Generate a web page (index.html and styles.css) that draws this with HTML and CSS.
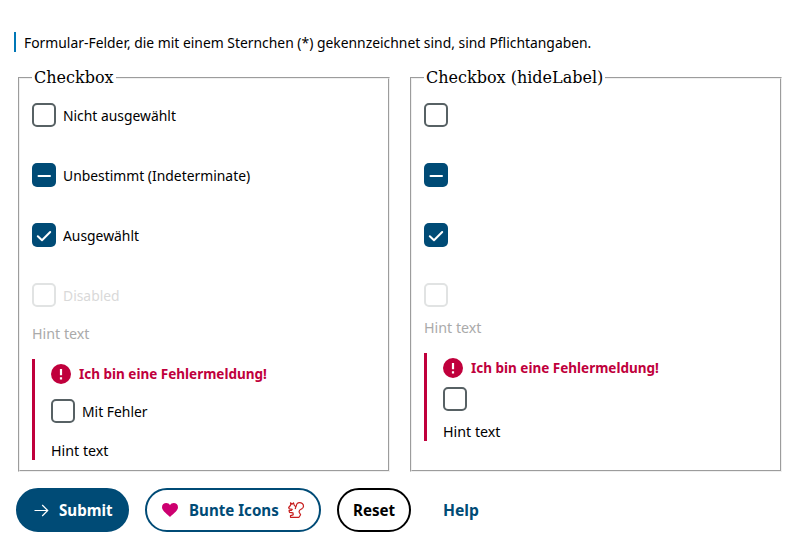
FILE: index.html
```
<!DOCTYPE html>
<html lang="de">
<head>
<meta charset="utf-8">
<title>Checkbox</title>
<link rel="stylesheet" href="styles.css">
</head>
<body>
<form class="form">
  <p class="notice"><span class="text">Formular-Felder, die mit einem Sternchen (*) gekennzeichnet sind, sind Pflichtangaben.</span></p>
  <div class="columns">
    <fieldset class="group">
      <legend>Checkbox</legend>
      <div class="field"><span class="box"></span><span class="label text">Nicht ausgewählt</span></div>
      <div class="field"><span class="box box-on"><svg viewBox="0 0 24 24"><path d="M6.500 13h11.500"/></svg></span><span class="label text">Unbestimmt (Indeterminate)</span></div>
      <div class="field"><span class="box box-on"><svg viewBox="0 0 24 24"><path d="M5.800 13.200 10 17.200 18.200 9"/></svg></span><span class="label text">Ausgewählt</span></div>
      <div class="field field-disabled"><span class="box"></span><span class="label text">Disabled</span></div>
      <div class="hint hint-disabled"><span class="text">Hint text</span></div>
      <div class="error">
        <div class="message"><svg class="alert" viewBox="0 0 20 20"><circle cx="10" cy="10" r="10"/><path d="M10 5v6.200M10 13.200v2.200"/></svg><span class="text">Ich bin eine Fehlermeldung!</span></div>
        <div class="field"><span class="box"></span><span class="label text">Mit Fehler</span></div>
        <div class="hint"><span class="text">Hint text</span></div>
      </div>
    </fieldset>
    <fieldset class="group group-compact">
      <legend>Checkbox (hideLabel)</legend>
      <div class="field"><span class="box"></span></div>
      <div class="field"><span class="box box-on"><svg viewBox="0 0 24 24"><path d="M6.500 13h11.500"/></svg></span></div>
      <div class="field"><span class="box box-on"><svg viewBox="0 0 24 24"><path d="M5.800 13.200 10 17.200 18.200 9"/></svg></span></div>
      <div class="field field-disabled"><span class="box"></span></div>
      <div class="hint hint-disabled"><span class="text">Hint text</span></div>
      <div class="error">
        <div class="message"><svg class="alert" viewBox="0 0 20 20"><circle cx="10" cy="10" r="10"/><path d="M10 5v6.200M10 13.200v2.200"/></svg><span class="text">Ich bin eine Fehlermeldung!</span></div>
        <div class="field"><span class="box"></span></div>
        <div class="hint"><span class="text">Hint text</span></div>
      </div>
    </fieldset>
  </div>
  <div class="actions">
    <button type="button" class="button submit"><svg class="icon" viewBox="0 0 16 16"><path d="M.5 8.500h13.200M8.200 3l5.500 5.500L8.200 14"/></svg><span class="text">Submit</span></button>
    <button type="button" class="button colored"><svg class="icon heart" viewBox="0 0 16 16"><path d="M8 15C5.500 12.200 0 9 0 5.200 0 .2 6.500-.2 8 3.200 9.500-.2 16 .2 16 5.200 16 9 10.500 12.200 8 15Z"/></svg><span class="text">Bunte Icons</span><svg class="icon squirrel" viewBox="0 0 16 16"><path d="M2.800 3 2.500.8 4.200 2.200 5.500.8 6.200 3.200 7.800 4.800 7.200 7M2.800 3 .7 5.500 1.200 6.800 4.200 7.300 3.200 8.500H1L1.500 10.300 5 10.800 5.200 12.800 2.500 13.600V15.300H11L12.600 12.800 11.200 10.200C10.200 6.500 15.500 8.200 15.500 4.200 15.500 1.500 13.500.7 11.500.7 9.500.7 8.300 2 8.300 4.500"/></svg></button>
    <button type="button" class="button reset"><span class="text">Reset</span></button>
    <button type="button" class="button help"><span class="text">Help</span></button>
  </div>
</form>
</body>
</html>
```
FILE: styles.css
```
* { box-sizing: border-box; }
body {
  margin: 0;
  background: #fff;
  color: #000;
  font: 15px/20px "Noto Sans", sans-serif;
}
.form { padding: 32px 16px 0; }
.text { display: inline-block; white-space: nowrap; transform: scaleX(.925); transform-origin: left; }
.notice {
  margin: 0 0 16px -2px;
  border-left: 2px solid #0077b6;
  padding: 0 0 0 8px;
  height: 20px;
}
.columns { display: grid; grid-template-columns: 1fr 1fr; gap: 16px; }
.group {
  min-width: 0;
  height: 404px;
  margin: 0 2px;
  padding: 5.600px 12px 10px;
  border: 2px groove #f0f0f0;
}
legend { padding: 0 2px; font: 16px/19px "DejaVu Serif", serif; }
.field { display: flex; align-items: center; gap: 7px; height: 24px; margin-bottom: 36px; }
.group > legend + .field { margin-top: 10px; }
.box { flex: none; width: 24px; height: 24px; border: 2px solid #576164; border-radius: 5px; }
.box-on { border: 0; background: #004b76; }
.box svg { display: block; width: 24px; height: 24px; fill: none; stroke: #fff; stroke-width: 2; stroke-linecap: round; stroke-linejoin: round; }
.label { padding-top: 1px; }
.field-disabled { margin-bottom: 16px; }
.field-disabled .box { border-color: #e1e3e3; }
.field-disabled .label { color: #d9d9d9; }
.hint-disabled { color: #aaa; margin-bottom: 16px; }
.hint .text { transform: scaleX(.95); }
.error { height: 101px; border-left: 3px solid #c0003c; padding: 5px 0 0 16px; }
.message { display: flex; align-items: center; gap: 8px; height: 20px; color: #c0003c; font-weight: 700; }
.message .text { padding-bottom: 2px; transform: scaleX(.9); }
.alert { width: 20px; height: 20px; fill: #c0003c; }
.alert path { stroke: #fff; stroke-width: 2.200; }
.error .field { margin: 15px 0 17px; }
.group-compact .field-disabled { margin-bottom: 10px; }
.group-compact .error { height: 88px; }
.group-compact .error .field { margin: 9px 0 10px; }
.actions { display: flex; gap: 16px; margin-top: 16px; }
.button {
  display: flex;
  align-items: center;
  height: 44px;
  padding: 0 0 0 14px;
  border: 2px solid #004b76;
  border-radius: 22px;
  background: #fff;
  color: #004b76;
  font: 700 16px/24px "Noto Sans", sans-serif;
}
.button .text { transform: scaleX(.945); }
.icon { flex: none; width: 16px; height: 16px; fill: none; stroke: currentColor; stroke-width: 1.200; overflow: visible; }
.submit { width: 113px; padding-left: 16px; gap: 9px; background: #004b76; color: #fff; }
.colored { width: 176px; padding-left: 15px; gap: 11px; }
.colored .text { margin-right: -7px; }
.heart { fill: #cd0070; stroke: none; }
.squirrel { color: #c71e1e; stroke-width: 1.200; stroke-linejoin: round; }
.reset { width: 74px; border-color: #000; color: #000; }
.help { width: 68px; border-color: transparent; }
.help .text { transform: scaleX(.98); }
```
